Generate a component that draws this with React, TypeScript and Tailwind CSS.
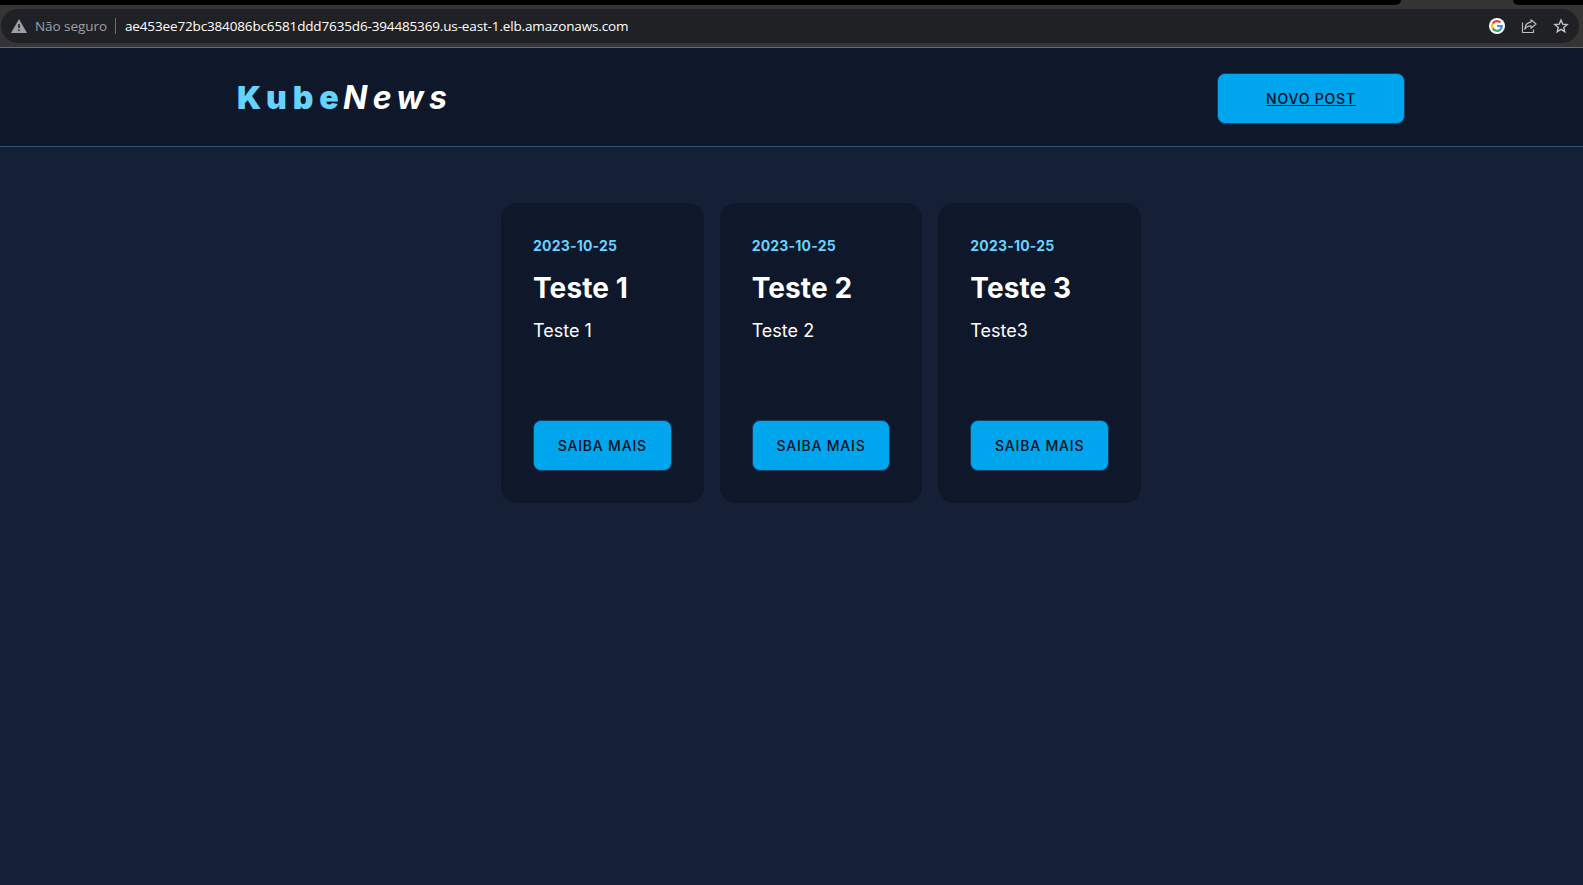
import React from 'react';

const posts = [
  { date: '2023-10-25', title: 'Teste 1', text: 'Teste 1' },
  { date: '2023-10-25', title: 'Teste 2', text: 'Teste 2' },
  { date: '2023-10-25', title: 'Teste 3', text: 'Teste3' },
];

function AddressBar() {
  return (
    <div className="flex h-12 flex-col border-b border-[#6a6a6a] bg-[#353535] font-['Open_Sans',sans-serif]">
      <div className="flex h-[5px] justify-between">
        <div className="w-[1401px] rounded-br-[6px] bg-black" />
        <div className="w-[70px] rounded-bl-[6px] bg-black" />
      </div>
      <div className="mt-1 ml-px flex h-[34px] w-[1578px] items-center rounded-full bg-[#202124] pl-[10px] pr-[10px]">
        <svg className="h-[14px] w-4" viewBox="0 0 16 14">
          <path fill="#9aa0a6" d="M8 0 16 14H0Z" />
          <path fill="#202124" d="M7.2 5h1.6v4H7.2zM7.2 10.4h1.6V12H7.2z" />
        </svg>
        <span className="ml-2 w-[73px] whitespace-nowrap text-[13.5px] tracking-[-0.05px] text-[#9aa0a6]">Não seguro</span>
        <span className="ml-[7px] h-4 w-px bg-[#6b6e72]" />
        <span className="ml-[9px] whitespace-nowrap text-[13.5px] tracking-[-0.145px] text-white">
          ae453ee72bc384086bc6581ddd7635d6-394485369.us-east-1.elb.amazonaws.com
        </span>
        <div className="ml-auto flex items-center gap-4">
          <svg className="size-4" viewBox="0 0 16 16">
            <circle cx="8" cy="8" r="8" fill="#fff" />
            <g fill="none" strokeWidth="2.2">
              <path stroke="#ea4335" d="M3.8 5.6A4.8 4.8 0 0 1 11.4 4.6" />
              <path stroke="#fbbc05" d="M3.8 10.4A4.8 4.8 0 0 1 3.8 5.6" />
              <path stroke="#34a853" d="M11.2 11.6A4.8 4.8 0 0 1 3.8 10.4" />
              <path stroke="#4285f4" d="M8.1 8H12.8A4.8 4.8 0 0 1 11.2 11.6" />
            </g>
          </svg>
          <svg className="size-4" viewBox="0 0 16 16" fill="none" stroke="#b8babd" strokeWidth="1.2">
            <path d="M1.5 4.5V14.5H12.5V11.5" />
            <path strokeLinejoin="round" d="M10 1.8 15 6 10 10.2V7.8C7 7.8 5 8.8 3.8 11.2 4 7.4 6 4.6 10 4.1Z" />
          </svg>
          <svg className="size-4" viewBox="0 0 16 16" fill="none" stroke="#c2c4c7" strokeWidth="1.4">
            <path d="m8 2 1.7 4.1 4.4.4-3.4 2.9 1.1 4.3L8 11.4l-3.8 2.3 1.1-4.3-3.4-2.9 4.4-.4Z" />
          </svg>
        </div>
      </div>
    </div>
  );
}

function Header() {
  return (
    <header className="flex h-[99px] items-center justify-between border-b border-[#295270] bg-[#0f172a] pt-0.5 pr-[178px] pl-[237px]">
      <h1 className="flex items-baseline whitespace-nowrap text-[32px] leading-none">
        <span className="w-[106px] font-black tracking-[5.9px] text-[#66d3ff]">Kube</span>
        <span className="font-bold tracking-[5.3px] text-white italic">News</span>
      </h1>
      <a className="flex h-[51px] w-[188px] items-center justify-center rounded-lg border border-[#123f60] bg-[#00a6ed] pt-0.5 text-sm font-medium tracking-[0.8px] text-[#030f20] underline">
        NOVO POST
      </a>
    </header>
  );
}

export default function App() {
  return (
    <div className="flex h-[885px] flex-col overflow-hidden bg-[#151f35] font-['Inter',sans-serif]">
      <AddressBar />
      <Header />
      <main className="mt-14 ml-[501px] grid w-[640px] grid-cols-3 gap-4">
        {posts.map((post) => (
          <article key={post.title} className="flex h-[300px] flex-col rounded-2xl bg-[#0f172a] p-8">
            <p className="text-sm leading-[22px] font-bold tracking-[0.2px] text-[#66d3ff]">{post.date}</p>
            <h2 className="mt-[11px] text-[28px] leading-10 font-bold tracking-[0.1px] text-white">{post.title}</h2>
            <p className="mt-[9px] text-lg leading-7 text-white">{post.text}</p>
            <button className="mt-auto h-[51px] rounded-lg border border-[#123f60] bg-[#00a6ed] text-sm font-medium tracking-[0.8px] text-[#030f20]">
              SAIBA MAIS
            </button>
          </article>
        ))}
      </main>
    </div>
  );
}
